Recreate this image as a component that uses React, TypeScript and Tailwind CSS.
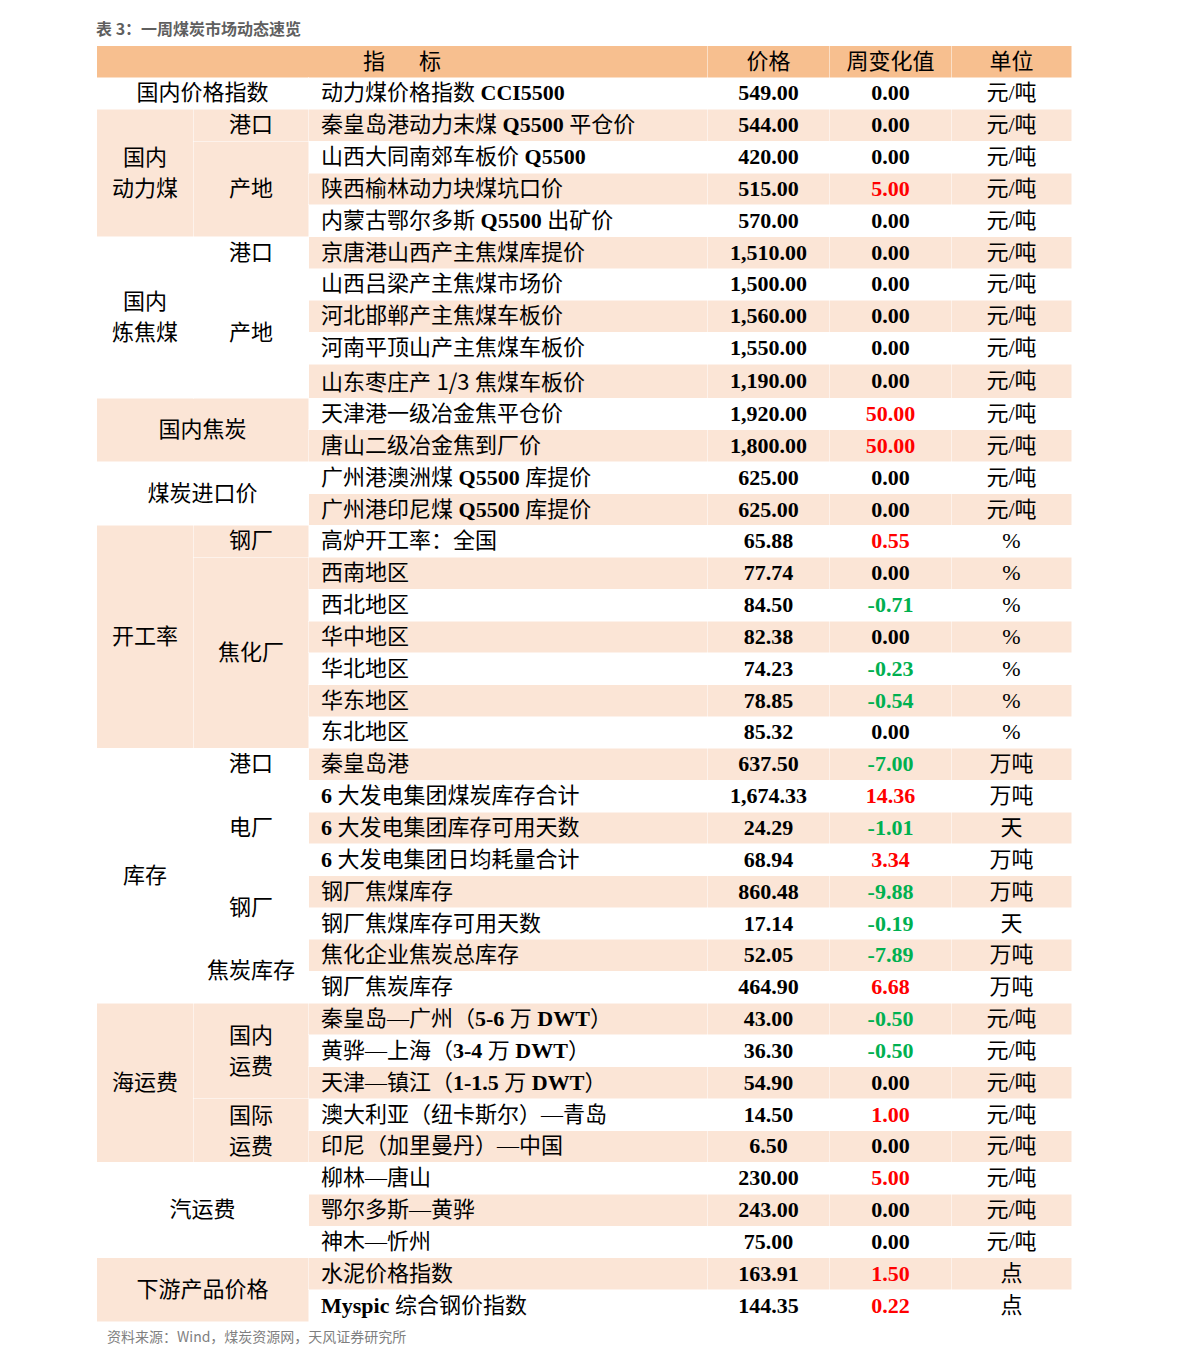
import type { ReactNode } from "react";

type Row = { name: ReactNode; price: string; chg: string; c?: "r" | "g"; unit: string };
type Sub = { label: ReactNode; n: number };
type Group = { label: ReactNode; shade: boolean; subs?: Sub[]; n?: number };

const B = ({ children }: { children: ReactNode }) => <b className="font-bold">{children}</b>;

const rows: Row[] = [
  { name: <>动力煤价格指数 <B>CCI5500</B></>, price: "549.00", chg: "0.00", unit: "元/吨" },
  { name: <>秦皇岛港动力末煤 <B>Q5500</B> 平仓价</>, price: "544.00", chg: "0.00", unit: "元/吨" },
  { name: <>山西大同南郊车板价 <B>Q5500</B></>, price: "420.00", chg: "0.00", unit: "元/吨" },
  { name: "陕西榆林动力块煤坑口价", price: "515.00", chg: "5.00", c: "r", unit: "元/吨" },
  { name: <>内蒙古鄂尔多斯 <B>Q5500</B> 出矿价</>, price: "570.00", chg: "0.00", unit: "元/吨" },
  { name: "京唐港山西产主焦煤库提价", price: "1,510.00", chg: "0.00", unit: "元/吨" },
  { name: "山西吕梁产主焦煤市场价", price: "1,500.00", chg: "0.00", unit: "元/吨" },
  { name: "河北邯郸产主焦煤车板价", price: "1,560.00", chg: "0.00", unit: "元/吨" },
  { name: "河南平顶山产主焦煤车板价", price: "1,550.00", chg: "0.00", unit: "元/吨" },
  {
    name: <>山东枣庄产 <span className="font-['Noto_Sans_CJK_SC',sans-serif]">1/3</span> 焦煤车板价</>,
    price: "1,190.00",
    chg: "0.00",
    unit: "元/吨",
  },
  { name: "天津港一级冶金焦平仓价", price: "1,920.00", chg: "50.00", c: "r", unit: "元/吨" },
  { name: "唐山二级冶金焦到厂价", price: "1,800.00", chg: "50.00", c: "r", unit: "元/吨" },
  { name: <>广州港澳洲煤 <B>Q5500</B> 库提价</>, price: "625.00", chg: "0.00", unit: "元/吨" },
  { name: <>广州港印尼煤 <B>Q5500</B> 库提价</>, price: "625.00", chg: "0.00", unit: "元/吨" },
  { name: "高炉开工率：全国", price: "65.88", chg: "0.55", c: "r", unit: "%" },
  { name: "西南地区", price: "77.74", chg: "0.00", unit: "%" },
  { name: "西北地区", price: "84.50", chg: "-0.71", c: "g", unit: "%" },
  { name: "华中地区", price: "82.38", chg: "0.00", unit: "%" },
  { name: "华北地区", price: "74.23", chg: "-0.23", c: "g", unit: "%" },
  { name: "华东地区", price: "78.85", chg: "-0.54", c: "g", unit: "%" },
  { name: "东北地区", price: "85.32", chg: "0.00", unit: "%" },
  { name: "秦皇岛港", price: "637.50", chg: "-7.00", c: "g", unit: "万吨" },
  { name: <><B>6</B> 大发电集团煤炭库存合计</>, price: "1,674.33", chg: "14.36", c: "r", unit: "万吨" },
  { name: <><B>6</B> 大发电集团库存可用天数</>, price: "24.29", chg: "-1.01", c: "g", unit: "天" },
  { name: <><B>6</B> 大发电集团日均耗量合计</>, price: "68.94", chg: "3.34", c: "r", unit: "万吨" },
  { name: "钢厂焦煤库存", price: "860.48", chg: "-9.88", c: "g", unit: "万吨" },
  { name: "钢厂焦煤库存可用天数", price: "17.14", chg: "-0.19", c: "g", unit: "天" },
  { name: "焦化企业焦炭总库存", price: "52.05", chg: "-7.89", c: "g", unit: "万吨" },
  { name: "钢厂焦炭库存", price: "464.90", chg: "6.68", c: "r", unit: "万吨" },
  { name: <>秦皇岛—广州（<B>5-6</B> 万 <B>DWT</B>）</>, price: "43.00", chg: "-0.50", c: "g", unit: "元/吨" },
  { name: <>黄骅—上海（<B>3-4</B> 万 <B>DWT</B>）</>, price: "36.30", chg: "-0.50", c: "g", unit: "元/吨" },
  { name: <>天津—镇江（<B>1-1.5</B> 万 <B>DWT</B>）</>, price: "54.90", chg: "0.00", unit: "元/吨" },
  { name: "澳大利亚（纽卡斯尔）—青岛", price: "14.50", chg: "1.00", c: "r", unit: "元/吨" },
  { name: "印尼（加里曼丹）—中国", price: "6.50", chg: "0.00", unit: "元/吨" },
  { name: "柳林—唐山", price: "230.00", chg: "5.00", c: "r", unit: "元/吨" },
  { name: "鄂尔多斯—黄骅", price: "243.00", chg: "0.00", unit: "元/吨" },
  { name: "神木—忻州", price: "75.00", chg: "0.00", unit: "元/吨" },
  { name: "水泥价格指数", price: "163.91", chg: "1.50", c: "r", unit: "点" },
  { name: <><B>Myspic</B> 综合钢价指数</>, price: "144.35", chg: "0.22", c: "r", unit: "点" },
];

const Two = ({ a, b }: { a: string; b: string }) => (
  <div className="leading-[31px]">
    <div>{a}</div>
    <div>{b}</div>
  </div>
);

const groups: Group[] = [
  { label: "国内价格指数", shade: false, n: 1 },
  { label: <Two a="国内" b="动力煤" />, shade: true, subs: [{ label: "港口", n: 1 }, { label: "产地", n: 3 }] },
  { label: <Two a="国内" b="炼焦煤" />, shade: false, subs: [{ label: "港口", n: 1 }, { label: "产地", n: 4 }] },
  { label: "国内焦炭", shade: true, n: 2 },
  { label: "煤炭进口价", shade: false, n: 2 },
  { label: "开工率", shade: true, subs: [{ label: "钢厂", n: 1 }, { label: "焦化厂", n: 6 }] },
  {
    label: "库存",
    shade: false,
    subs: [
      { label: "港口", n: 1 },
      { label: "电厂", n: 3 },
      { label: "钢厂", n: 2 },
      { label: "焦炭库存", n: 2 },
    ],
  },
  {
    label: "海运费",
    shade: true,
    subs: [
      { label: <Two a="国内" b="运费" />, n: 3 },
      { label: <Two a="国际" b="运费" />, n: 2 },
    ],
  },
  { label: "汽运费", shade: false, n: 3 },
  { label: "下游产品价格", shade: true, n: 2 },
];

const cell = "border border-white/50 p-0 align-middle";

function RowCells({ r, i }: { r: Row; i: number }) {
  const bg = i % 2 === 1 ? "bg-[#fbe5d6]" : "bg-white";
  const col = r.c === "r" ? "text-[#ff0000]" : r.c === "g" ? "text-[#00b050]" : "text-black";
  return (
    <>
      <td className={`${cell} ${bg} whitespace-nowrap pl-3 text-left`}>{r.name}</td>
      <td className={`${cell} ${bg} text-center font-bold`}>{r.price}</td>
      <td className={`${cell} ${bg} text-center font-bold ${col}`}>{r.chg}</td>
      <td className={`${cell} ${bg} text-center`}>{r.unit}</td>
    </>
  );
}

export default function App() {
  const trs: ReactNode[] = [];
  let k = 0;
  groups.forEach((g, gi) => {
    const gbg = g.shade ? "bg-[#fbe5d6]" : "bg-white";
    if (g.subs) {
      const total = g.subs.reduce((s, x) => s + x.n, 0);
      g.subs.forEach((s, si) => {
        for (let j = 0; j < s.n; j++) {
          const idx = k++;
          trs.push(
            <tr key={idx} className="h-[31.85px]">
              {si === 0 && j === 0 && (
                <td rowSpan={total} className={`${cell} ${gbg} text-center`}>
                  {g.label}
                </td>
              )}
              {j === 0 && (
                <td rowSpan={s.n} className={`${cell} ${gbg} text-center`}>
                  {s.label}
                </td>
              )}
              <RowCells r={rows[idx]} i={idx} />
            </tr>
          );
        }
      });
    } else {
      for (let j = 0; j < (g.n ?? 1); j++) {
        const idx = k++;
        trs.push(
          <tr key={idx} className="h-[31.85px]">
            {j === 0 && (
              <td key={`g${gi}`} rowSpan={g.n} colSpan={2} className={`${cell} ${gbg} text-center`}>
                {g.label}
              </td>
            )}
            <RowCells r={rows[idx]} i={idx} />
          </tr>
        );
      }
    }
  });

  return (
    <div className="min-h-[1365px] bg-white pl-[96px] pt-[18px]">
      <div className="mb-[7px] h-[20px] font-['Noto_Sans_CJK_SC',sans-serif] text-[16px] font-bold leading-[20px] text-[#5f5f5f]">
        表 3：一周煤炭市场动态速览
      </div>
      <table className="w-[975px] table-fixed border-collapse font-['Liberation_Serif','Noto_Sans_CJK_SC',serif] text-[22px] leading-[30px] text-black">
        <colgroup>
          <col className="w-[97px]" />
          <col className="w-[115px]" />
          <col className="w-[399px]" />
          <col className="w-[122px]" />
          <col className="w-[122px]" />
          <col className="w-[120px]" />
        </colgroup>
        <thead>
          <tr className="h-[32px] bg-[#f7bf8f]">
            <th colSpan={3} className={`${cell} text-center font-normal`}>
              指<span className="ml-[34px]">标</span>
            </th>
            <th className={`${cell} text-center font-normal`}>价格</th>
            <th className={`${cell} text-center font-normal`}>周变化值</th>
            <th className={`${cell} text-center font-normal`}>单位</th>
          </tr>
        </thead>
        <tbody>{trs}</tbody>
      </table>
      <div className="mt-[4px] pl-[11px] font-['Noto_Sans_CJK_SC',sans-serif] text-[14px] leading-[20px] text-[#7f7f7f]">
        资料来源：Wind，煤炭资源网，天风证券研究所
      </div>
    </div>
  );
}
